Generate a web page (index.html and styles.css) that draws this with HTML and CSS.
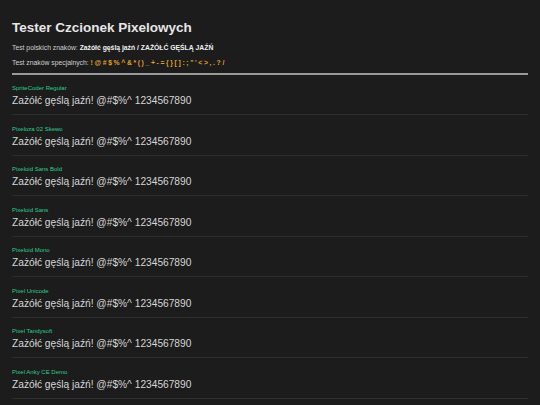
FILE: index.html
```html
<!DOCTYPE html>
<html lang="pl">
<head>
    <meta charset="UTF-8">
    <meta name="viewport" content="width=device-width, initial-scale=1.0">
    <title>Tester Czcionek Pixelowych</title>
    <link rel="stylesheet" href="styles.css">
</head>
<body>
    <div class="container">
        <h1>Tester Czcionek Pixelowych</h1>
        <p class="info">Test polskich znaków: <b>Zażółć gęślą jaźń / ZAŻÓŁĆ GĘŚLĄ JAŹŃ</b></p>
        <p class="info">Test znaków specjalnych: <b class="special">! @ # $ % ^ &amp; * ( ) _ + - = { } [ ] : ; " ' &lt; &gt; , . ? /</b></p>
        <hr class="divider">

        <div class="font-row">
            <div class="font-name">SpriteCoder Regular</div>
            <div class="sample">Zażółć gęślą jaźń! @#$%^ 1234567890</div>
        </div>
        <div class="font-row">
            <div class="font-name">Pixeloza 02 Skewo</div>
            <div class="sample">Zażółć gęślą jaźń! @#$%^ 1234567890</div>
        </div>
        <div class="font-row">
            <div class="font-name">Pixeloid Sans Bold</div>
            <div class="sample">Zażółć gęślą jaźń! @#$%^ 1234567890</div>
        </div>
        <div class="font-row">
            <div class="font-name">Pixeloid Sans</div>
            <div class="sample">Zażółć gęślą jaźń! @#$%^ 1234567890</div>
        </div>
        <div class="font-row">
            <div class="font-name">Pixeloid Mono</div>
            <div class="sample">Zażółć gęślą jaźń! @#$%^ 1234567890</div>
        </div>
        <div class="font-row">
            <div class="font-name">Pixel Unicode</div>
            <div class="sample">Zażółć gęślą jaźń! @#$%^ 1234567890</div>
        </div>
        <div class="font-row">
            <div class="font-name">Pixel Tandysoft</div>
            <div class="sample">Zażółć gęślą jaźń! @#$%^ 1234567890</div>
        </div>
        <div class="font-row">
            <div class="font-name">Pixel Anky CE Demo</div>
            <div class="sample">Zażółć gęślą jaźń! @#$%^ 1234567890</div>
        </div>
    </div>
</body>
</html>
```

FILE: styles.css
```css
* {
    padding: 0;
    margin: 0;
    box-sizing: border-box;
}

body {
    font-family: "Liberation Sans", Arial, sans-serif;
    background-color: #1c1c1c;
    color: #dddddd;
}

.container {
    padding: 20px 12px 0;
}

h1 {
    font-size: 13.5px;
    line-height: 16px;
    font-weight: bold;
    color: #e6e6e6;
    margin-bottom: 8px;
}

.info {
    font-size: 6.8px;
    line-height: 8px;
    color: #cfcfcf;
    margin-bottom: 7px;
}

.info b {
    color: #f0f0f0;
}

.info .special {
    color: #e0a030;
    word-spacing: -0.25px;
}

.divider {
    border: none;
    height: 2px;
    background-color: #9a9a9a;
    margin-top: -1px;
    margin-bottom: 9px;
}

.font-row {
    border-bottom: 1px solid #2e2e2e;
    padding-bottom: 6px;
    margin-bottom: 9.5px;
}

.font-name {
    font-size: 6px;
    line-height: 8px;
    color: #2ecc8f;
    margin-bottom: 2px;
}

.sample {
    font-size: 10.2px;
    line-height: 14px;
    color: #d6d6d6;
}
```
